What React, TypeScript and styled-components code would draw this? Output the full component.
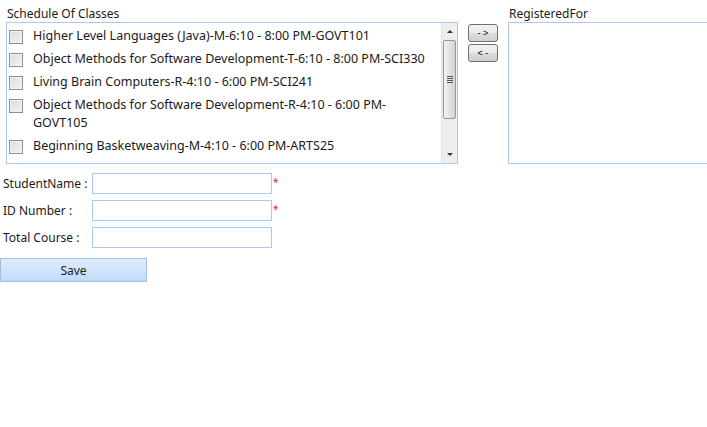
import * as React from 'react';
import styled, { createGlobalStyle } from 'styled-components';

const Global = createGlobalStyle`
  html, body {
    margin: 0;
    padding: 0;
    background: #ffffff;
  }
  body {
    font-family: "Noto Sans", "Open Sans", sans-serif;
    font-size: 12px;
    color: #1a1a1a;
  }
`;

const Page = styled.div`
  width: 707px;
  height: 427px;
  overflow: hidden;
  box-sizing: border-box;
  padding-top: 6px;
`;

const TopRow = styled.div`
  display: flex;
  align-items: flex-start;
  padding-left: 6px;
`;

const Column = styled.div`
  display: flex;
  flex-direction: column;
`;

const Caption = styled.div`
  height: 16px;
  line-height: 16px;
  padding-left: 1px;
`;

const ListBox = styled.div<{ $width: number }>`
  width: ${p => p.$width}px;
  height: 142px;
  box-sizing: border-box;
  border: 1px solid #a9c9ef;
  display: flex;
  overflow: hidden;
  background: #fff;
`;

const Items = styled.div`
  flex: 1;
  overflow: hidden;
  padding-top: 2px;
  font-size: 12.5px;
`;

const Item = styled.label`
  display: flex;
  align-items: flex-start;
  padding: 2px 0 3px 2px;
  line-height: 18px;
`;

const Box = styled.span`
  flex: none;
  width: 12px;
  height: 12px;
  margin-top: 3px;
  margin-right: 10px;
  border: 1px solid #8e8f8f;
  background: linear-gradient(135deg, #dcdcdc, #f2f2f2);
  box-shadow: inset 0 0 0 1px #f4f4f4;
`;

const ItemText = styled.span`
  width: 396px;
`;

const ScrollBar = styled.div`
  width: 15px;
  flex: none;
  background: #eeeeee;
  border-left: 1px solid #e4e4e4;
  display: flex;
  flex-direction: column;
  align-items: center;
`;

const Arrow = styled.div<{ $down?: boolean }>`
  height: 17px;
  width: 100%;
  display: flex;
  align-items: center;
  justify-content: center;
  &::after {
    content: '';
    border-left: 3px solid transparent;
    border-right: 3px solid transparent;
    ${p => p.$down ? 'border-top: 3px solid #333;' : 'border-bottom: 3px solid #333;'}
  }
`;

const Thumb = styled.div`
  width: 13px;
  height: 79px;
  box-sizing: border-box;
  border: 1px solid #979797;
  border-radius: 2px;
  background: linear-gradient(90deg, #f3f3f3, #e3e3e3 50%, #d3d3d3);
  display: flex;
  flex-direction: column;
  align-items: center;
  justify-content: center;
  gap: 1px;
`;

const Grip = styled.span`
  width: 6px;
  height: 1px;
  background: #555;
`;

const Spacer = styled.div`
  flex: 1;
`;

const Movers = styled.div`
  display: flex;
  flex-direction: column;
  gap: 2px;
  margin: 18px 10px 0 10px;
`;

const MoveButton = styled.button`
  width: 30px;
  height: 18px;
  padding: 0;
  box-sizing: border-box;
  border: 1px solid #707070;
  border-radius: 3px;
  background: linear-gradient(#f2f2f2, #ebebeb 50%, #dddddd 51%, #cfcfcf);
  font-family: "Liberation Sans", sans-serif;
  font-size: 9px;
  line-height: 14px;
  color: #000;
`;

const Form = styled.div`
  display: flex;
  flex-direction: column;
  gap: 6px;
  margin-top: 9px;
  padding-left: 3px;
`;

const FieldRow = styled.div`
  display: flex;
  align-items: center;
`;

const FieldLabel = styled.span`
  width: 89px;
  font-size: 12px;
`;

const Input = styled.input`
  width: 180px;
  height: 21px;
  box-sizing: border-box;
  border: 1px solid #a9c9ef;
  outline: none;
  padding: 0 3px;
`;

const Required = styled.span`
  color: #e2242a;
  font-size: 10px;
  line-height: 12px;
  margin-left: 1px;
  align-self: flex-start;
  margin-top: 3px;
`;

const SaveButton = styled.button`
  margin-top: 10px;
  width: 147px;
  height: 24px;
  box-sizing: border-box;
  border: 1px solid #9ec0e8;
  background: linear-gradient(#dfeeff, #cfe3fb 50%, #c2dbf9);
  font-family: "Noto Sans", sans-serif;
  font-size: 12px;
  color: #222;
  padding: 0;
`;

const classes = [
  'Higher Level Languages (Java)-M-6:10 - 8:00 PM-GOVT101',
  'Object Methods for Software Development-T-6:10 - 8:00 PM-SCI330',
  'Living Brain Computers-R-4:10 - 6:00 PM-SCI241',
  'Object Methods for Software Development-R-4:10 - 6:00 PM-GOVT105',
  'Beginning Basketweaving-M-4:10 - 6:00 PM-ARTS25',
  'Introduction to Databases-W-6:10 - 8:00 PM-SCI102',
];

export default function App() {
  return (
    <Page>
      <Global />
      <TopRow>
        <Column>
          <Caption>Schedule Of Classes</Caption>
          <ListBox $width={452}>
            <Items>
              {classes.map(c => (
                <Item key={c}>
                  <Box />
                  <ItemText>{c}</ItemText>
                </Item>
              ))}
            </Items>
            <ScrollBar>
              <Arrow />
              <Thumb>
                <Grip />
                <Grip />
                <Grip />
                <Grip />
              </Thumb>
              <Spacer />
              <Arrow $down />
            </ScrollBar>
          </ListBox>
        </Column>
        <Movers>
          <MoveButton>- &gt;</MoveButton>
          <MoveButton>&lt; -</MoveButton>
        </Movers>
        <Column>
          <Caption>RegisteredFor</Caption>
          <ListBox $width={210} />
        </Column>
      </TopRow>
      <Form>
        <FieldRow>
          <FieldLabel>StudentName :</FieldLabel>
          <Input />
          <Required>*</Required>
        </FieldRow>
        <FieldRow>
          <FieldLabel>ID Number :</FieldLabel>
          <Input />
          <Required>*</Required>
        </FieldRow>
        <FieldRow>
          <FieldLabel>Total Course :</FieldLabel>
          <Input />
        </FieldRow>
      </Form>
      <SaveButton>Save</SaveButton>
    </Page>
  );
}
